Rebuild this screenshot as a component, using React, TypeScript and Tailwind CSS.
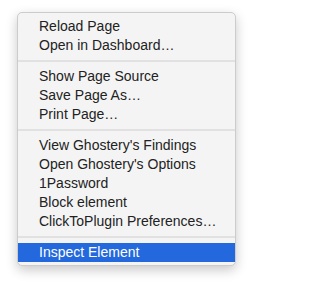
const groups: string[][] = [
  ["Reload Page", "Open in Dashboard…"],
  ["Show Page Source", "Save Page As…", "Print Page…"],
  [
    "View Ghostery's Findings",
    "Open Ghostery's Options",
    "1Password",
    "Block element",
    "ClickToPlugin Preferences…",
  ],
  ["Inspect Element"],
];

const MenuItem = ({ label, active }: { label: string; active?: boolean }) => (
  <div
    className={
      active
        ? "h-[19px] flex items-center pl-[21px] bg-[#2368dc] text-white"
        : "h-[19px] flex items-center pl-[21px] text-[#222222]"
    }
  >
    {label}
  </div>
);

export default function App() {
  return (
    <div className="w-[253px] h-[287px] bg-white pt-[12px] pl-[17px]">
      <div
        className="w-[219px] bg-[#f4f4f4] border border-[#cccccc] rounded-[5px] pt-[4px] pb-[3px] shadow-[0_4px_12px_rgba(0,0,0,0.22)] text-[14px] leading-[19px]"
        style={{ fontFamily: '"Liberation Sans", Arial, sans-serif' }}
      >
        {groups.map((group, i) => (
          <div key={i}>
            {i > 0 && <div className="h-[2px] bg-[#e1e1e1] my-[5px]" />}
            {group.map((label) => (
              <MenuItem
                key={label}
                label={label}
                active={label === "Inspect Element"}
              />
            ))}
          </div>
        ))}
      </div>
    </div>
  );
}
